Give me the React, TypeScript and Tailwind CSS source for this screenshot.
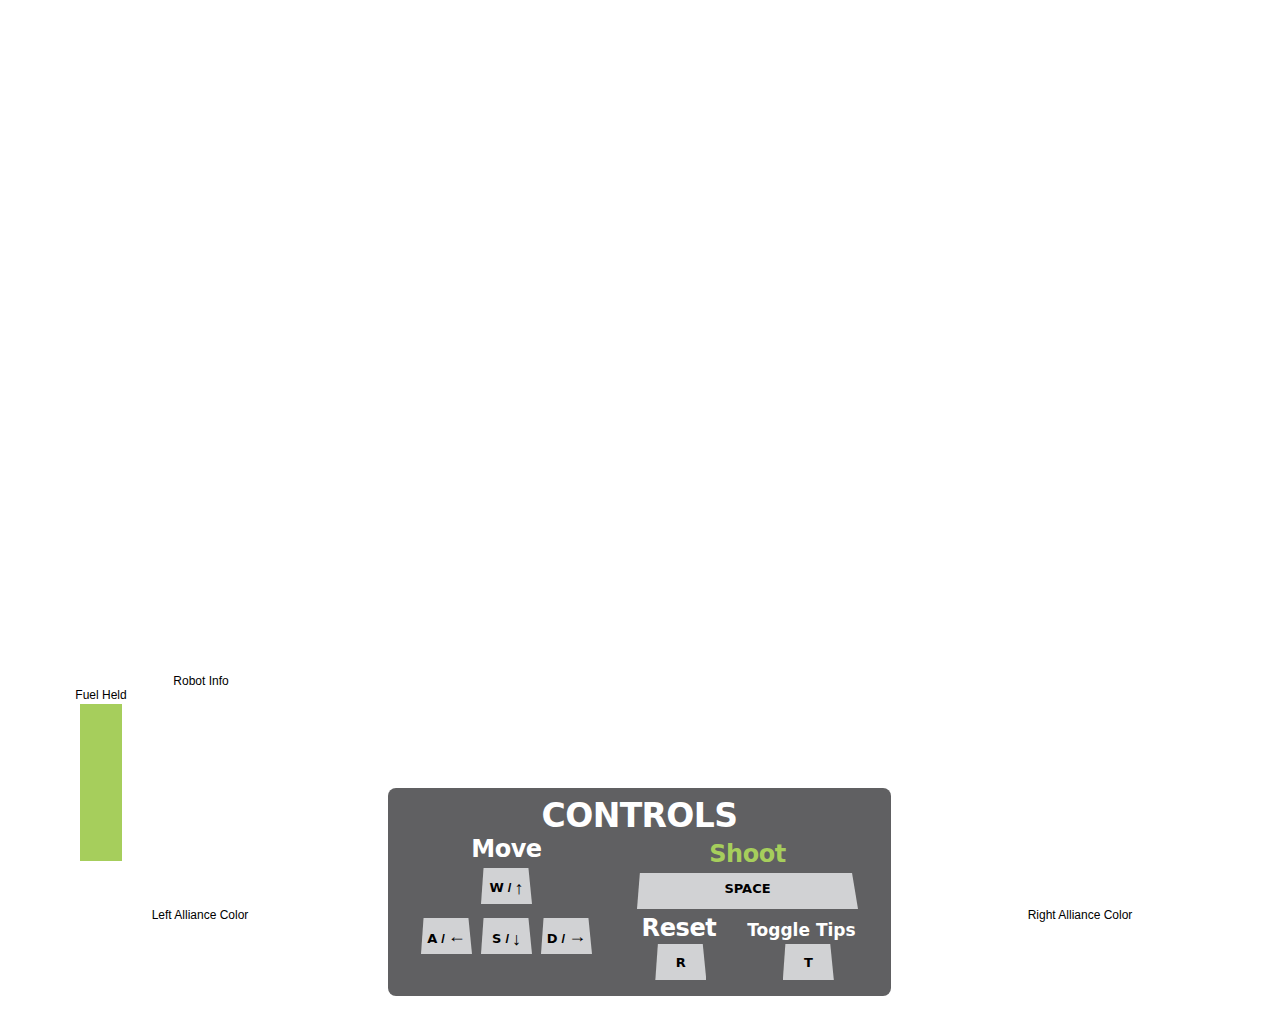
import React from 'react';

const heavy = { fontFamily: '"DejaVu Sans", "Liberation Sans", sans-serif' };

const Key: React.FC<{ label: string; arrow?: string; side?: boolean; className?: string }> = ({ label, arrow, side, className }) => (
  <div
    className={`h-[36px] bg-[#d1d2d4] flex items-center justify-center text-black [clip-path:polygon(5%_0,93%_0,100%_100%,0_100%)] ${className ?? 'w-[51px]'}`}
  >
    <span className="text-[13px] font-bold leading-none" style={heavy}>{label}</span>
    {arrow && (
      <>
        <span className="text-[13px] font-bold leading-none ml-[4px] font-['Liberation_Sans',sans-serif]">/</span>
        <span
          className={`text-[18px] leading-none ml-[3px] font-['Liberation_Sans',sans-serif] ${side ? '-translate-y-[3px]' : ''}`}
        >
          {arrow}
        </span>
      </>
    )}
  </div>
);

export default function App() {
  return (
    <div className="w-[1280px] h-[1024px] bg-white font-['Liberation_Sans',Arial,sans-serif] text-black overflow-hidden">
      {/* empty field area */}
      <div className="h-[674px]" />

      <div className="flex items-start">
        {/* left: robot info */}
        <div className="w-[388px] flex flex-col">
          <div className="ml-[150px] w-[102px] text-center text-[12px] leading-[14px]">Robot Info</div>
          <div className="ml-[80px] w-[42px] flex flex-col items-center">
            <div className="text-[12px] leading-[14px] whitespace-nowrap">Fuel Held</div>
            <div className="mt-[2px] w-[42px] h-[157px] bg-[#a6ce5c]" />
          </div>
          <div className="mt-[47px] pl-[12px] text-center text-[12px] leading-[14px]">Left Alliance Color</div>
        </div>

        {/* controls panel */}
        <div className="mt-[114px] w-[503px] h-[208px] bg-[#606062] rounded-[8px] flex flex-col items-center pt-[10px] text-white" style={heavy}>
          <div className="text-[33px] leading-[36px] font-bold tracking-[-0.6px]">CONTROLS</div>
          <div className="w-full flex px-[33px] gap-[45px]">
            {/* move */}
            <div className="w-[171px] flex flex-col items-center">
              <div className="mt-[2px] text-[24px] leading-[26px] font-bold tracking-[-0.5px]">Move</div>
              <Key label="W" arrow="↑" className="mt-[6px] w-[51px] pt-[3px]" />
              <div className="mt-[14px] flex gap-[9px]">
                <Key label="A" arrow="←" side className="w-[51px] pt-[5px]" />
                <Key label="S" arrow="↓" className="w-[51px] pt-[5px]" />
                <Key label="D" arrow="→" side className="w-[51px] pt-[5px]" />
              </div>
            </div>

            {/* shoot / reset / tips */}
            <div className="w-[221px] flex flex-col items-center">
              <div className="mt-[7px] text-[24px] leading-[26px] font-bold tracking-[-0.5px] text-[#a6ce5c]">Shoot</div>
              <div className="mt-[6px] w-[221px] h-[36px] pb-[6px] bg-[#d1d2d4] flex items-center justify-center text-black [clip-path:polygon(1.3%_0,97.3%_0,100%_100%,0_100%)]">
                <span className="text-[13px] font-bold leading-none">SPACE</span>
              </div>
              <div className="mt-[6px] w-full flex items-baseline">
                <div className="w-[89px] text-center text-[24px] leading-[26px] font-bold tracking-[-0.4px]">Reset</div>
                <div className="ml-[24px] w-[120px] text-center text-[17px] leading-[20px] font-bold">Toggle Tips</div>
              </div>
              <div className="mt-[3px] w-full flex">
                <div className="w-[89px] flex justify-center pl-[4px]">
                  <Key label="R" />
                </div>
                <div className="ml-[24px] w-[120px] flex justify-center pl-[14px]">
                  <Key label="T" />
                </div>
              </div>
            </div>
          </div>
        </div>

        {/* right */}
        <div className="flex-1 mt-[234px] pr-[11px] text-center text-[12px] leading-[14px]">Right Alliance Color</div>
      </div>
    </div>
  );
}
